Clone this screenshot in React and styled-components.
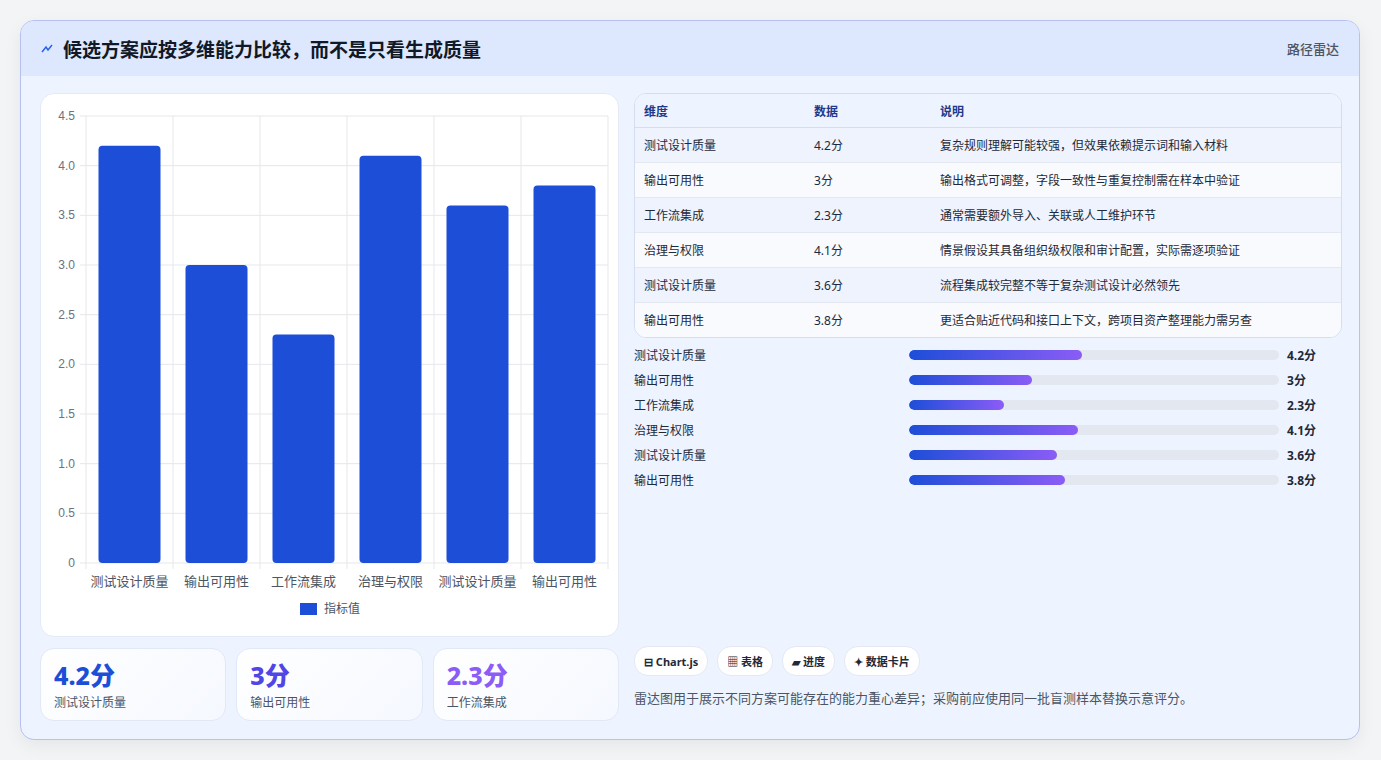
import React from 'react';
import styled, { createGlobalStyle } from 'styled-components';

const GlobalStyle = createGlobalStyle`
  html, body { margin: 0; padding: 0; background: #f3f4f6; }
  body { font-family: "Noto Sans", "Noto Sans CJK SC", sans-serif; }
`;

const rows = [
  { name: '测试设计质量', v: 4.2, note: '复杂规则理解可能较强，但效果依赖提示词和输入材料' },
  { name: '输出可用性', v: 3, note: '输出格式可调整，字段一致性与重复控制需在样本中验证' },
  { name: '工作流集成', v: 2.3, note: '通常需要额外导入、关联或人工维护环节' },
  { name: '治理与权限', v: 4.1, note: '情景假设其具备组织级权限和审计配置，实际需逐项验证' },
  { name: '测试设计质量', v: 3.6, note: '流程集成较完整不等于复杂测试设计必然领先' },
  { name: '输出可用性', v: 3.8, note: '更适合贴近代码和接口上下文，跨项目资产整理能力需另查' },
];

const Page = styled.div`
  padding: 20px 20px 20px 20px;
  width: 1341px;
  box-sizing: border-box;
  margin: 0 0 0 0;
  padding-left: 20px;
`;

const Frame = styled.div`
  width: 1340px;
  height: 720px;
  box-sizing: border-box;
  border: 1px solid #b7c0ef;
  border-radius: 14px;
  background: #eef4ff;
  overflow: hidden;
  display: flex;
  flex-direction: column;
  box-shadow: 0 6px 18px rgba(0,0,0,0.06);
`;

const Header = styled.div`
  height: 55px;
  background: #dde7fd;
  display: flex;
  align-items: center;
  justify-content: space-between;
  padding: 0 20px;
  flex-shrink: 0;
`;

const Title = styled.h1`
  margin: 0;
  font-size: 19px;
  font-weight: 700;
  color: #111827;
  display: flex;
  align-items: center;
  gap: 10px;
`;

const Tag = styled.span`
  font-size: 13px;
  color: #4b5563;
  font-weight: 500;
`;

const Body = styled.div`
  flex: 1;
  display: grid;
  grid-template-columns: 579px 708px;
  gap: 15px;
  padding: 17px 19px 18px 19px;
`;

const Col = styled.div`
  display: flex;
  flex-direction: column;
  gap: 11px;
`;

const ChartCard = styled.div`
  background: #fff;
  border: 1px solid #e3e9f5;
  border-radius: 14px;
  height: 544px;
  box-sizing: border-box;
`;

const Stats = styled.div`
  display: grid;
  grid-template-columns: repeat(3, 1fr);
  gap: 10px;
`;

const Stat = styled.div`
  background: linear-gradient(135deg, #ffffff, #f5f8ff);
  border: 1px solid #e1e8f6;
  border-radius: 14px;
  height: 73px;
  box-sizing: border-box;
  padding: 10px 13px;
`;

const StatNum = styled.div`
  font-size: 25px;
  font-weight: 800;
  color: ${p => p.c};
  line-height: 32px;
`;

const StatLabel = styled.div`
  font-size: 12px;
  color: #4b5563;
  margin-top: 2px;
`;

const TableBox = styled.div`
  border: 1px solid #d5deef;
  border-radius: 12px;
  overflow: hidden;
  background: #f7f9fd;
`;

const Table = styled.table`
  width: 100%;
  border-collapse: collapse;
  font-size: 12px;
  color: #1f2937;
  th, td { text-align: left; padding: 0 9px; }
  th { height: 33px; color: #1e3a8a; font-weight: 600; background: #eef4ff; border-bottom: 1px solid #d5deef; }
  td { height: 34px; border-bottom: 1px solid #e3e8f1; }
  tr:last-child td { border-bottom: none; }
  tbody tr:nth-child(odd) td { background: #eef3fd; }
  tbody tr:nth-child(even) td { background: #f8fafd; }
`;

const Bars = styled.div`
  display: flex;
  flex-direction: column;
  gap: 7px;
  margin-top: 8px;
`;

const BarRow = styled.div`
  display: grid;
  grid-template-columns: 267px 370px 1fr;
  align-items: center;
  gap: 0 8px;
  font-size: 12px;
  color: #1f2937;
  height: 18px;
`;

const Track = styled.div`
  height: 10px;
  background: #e2e7f0;
  border-radius: 5px;
  overflow: hidden;
`;

const Fill = styled.div`
  height: 100%;
  border-radius: 5px;
  background: linear-gradient(90deg, #1d4ed8, #8b5cf6);
`;

const Val = styled.span`
  font-weight: 700;
`;

const Chips = styled.div`
  display: flex;
  gap: 9px;
  margin-top: auto;
`;

const Chip = styled.span`
  background: #fff;
  border: 1px solid #e3e8f3;
  border-radius: 14px;
  height: 28px;
  padding: 0 9px;
  display: inline-flex;
  align-items: center;
  font-size: 11px;
  font-weight: 700;
  color: #1f2937;
`;

const Note = styled.p`
  margin: 12px 0 14px;
  font-size: 13px;
  color: #4b5563;
`;

function BarChart() {
  const x0 = 45, x1 = 567, y0 = 22, y1 = 469;
  const ticks = [0, 0.5, 1, 1.5, 2, 2.5, 3, 3.5, 4, 4.5];
  const cw = (x1 - x0) / 6;
  const y = v => y1 - (v / 4.5) * (y1 - y0);
  return (
    <svg width="579" height="544" style={{ display: 'block' }}>
      {ticks.map(t => (
        <g key={t}>
          <line x1={x0 - 6} x2={x1} y1={y(t)} y2={y(t)} stroke="#e5e7eb" />
          <text x={x0 - 11} y={y(t) + 4} textAnchor="end" fontSize="12" fill="#6b7280" fontFamily="Liberation Sans, sans-serif">{t === 0 ? '0' : t.toFixed(1)}</text>
        </g>
      ))}
      {Array.from({ length: 7 }).map((_, i) => (
        <line key={i} x1={x0 + i * cw} x2={x0 + i * cw} y1={y0} y2={y1 + 6} stroke="#e5e7eb" />
      ))}
      {rows.map((r, i) => (
        <g key={i}>
          <rect x={x0 + i * cw + 12.5} y={y(r.v)} width={cw - 25} height={y1 - y(r.v)} rx="4" fill="#1d4ed8" />
          <text x={x0 + i * cw + cw / 2} y={y1 + 23} textAnchor="middle" fontSize="13" fill="#4b5563" fontFamily="Noto Sans CJK SC, sans-serif">{r.name}</text>
        </g>
      ))}
      <rect x="259" y="509" width="17" height="12" fill="#1d4ed8" />
      <text x="283" y="519" fontSize="12" fill="#4b5563" fontFamily="Noto Sans CJK SC, sans-serif">指标值</text>
    </svg>
  );
}

export default function App() {
  const statColors = ['#1d4ed8', '#4f46e5', '#8b5cf6'];
  return (
    <Page>
      <GlobalStyle />
      <Frame>
        <Header>
          <Title>
            <svg width="12" height="10" viewBox="0 0 12 10"><path d="M1 8 L5 3 L7 6 L11 1" stroke="#2563eb" strokeWidth="1.5" fill="none" /></svg>
            候选方案应按多维能力比较，而不是只看生成质量
          </Title>
          <Tag>路径雷达</Tag>
        </Header>
        <Body>
          <Col>
            <ChartCard><BarChart /></ChartCard>
            <Stats>
              {rows.slice(0, 3).map((r, i) => (
                <Stat key={i}>
                  <StatNum c={statColors[i]}>{r.v}分</StatNum>
                  <StatLabel>{r.name}</StatLabel>
                </Stat>
              ))}
            </Stats>
          </Col>
          <Col style={{ gap: 0 }}>
            <TableBox>
              <Table>
                <thead>
                  <tr><th style={{ width: 152 }}>维度</th><th style={{ width: 108 }}>数据</th><th>说明</th></tr>
                </thead>
                <tbody>
                  {rows.map((r, i) => (
                    <tr key={i}><td>{r.name}</td><td>{r.v}分</td><td>{r.note}</td></tr>
                  ))}
                </tbody>
              </Table>
            </TableBox>
            <Bars>
              {rows.map((r, i) => (
                <BarRow key={i}>
                  <span>{r.name}</span>
                  <Track><Fill style={{ width: `${(r.v / 9) * 100}%` }} /></Track>
                  <Val>{r.v}分</Val>
                </BarRow>
              ))}
            </Bars>
            <Chips>
              <Chip>⊟ Chart.js</Chip>
              <Chip>▦ 表格</Chip>
              <Chip>▰ 进度</Chip>
              <Chip>✦ 数据卡片</Chip>
            </Chips>
            <Note>雷达图用于展示不同方案可能存在的能力重心差异；采购前应使用同一批盲测样本替换示意评分。</Note>
          </Col>
        </Body>
      </Frame>
    </Page>
  );
}
